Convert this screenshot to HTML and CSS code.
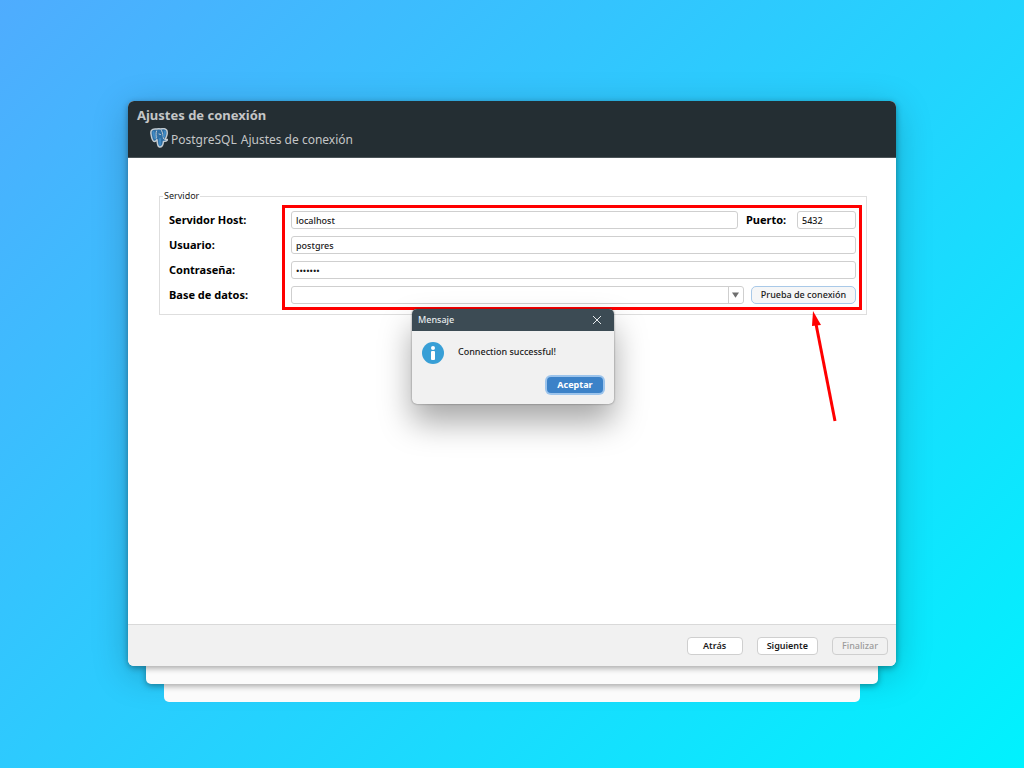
FILE: index.html
```html
<!DOCTYPE html>
<html lang="es">
  <head>
    <meta charset="UTF-8" />
    <meta name="viewport" content="width=device-width, initial-scale=1.0" />
    <title>Ajustes de conexión</title>
    <link rel="stylesheet" href="styles.css">
  </head>

  <body>
    <div class="stack">
      <div class="window">
        <header class="header">
          <h1>Ajustes de conexión</h1>
          <p>
            <svg class="logo" viewBox="0 0 36 40" aria-hidden="true">
              <path d="M10 2C3 2 1 6 2 12c1 7 3 15 7 15 2 0 3-2 5-3 1 5 0 13 5 14 7 1 7-6 8-11 3 0 8-1 8-4h-5c4-6 6-15 3-19-3-3-8-3-11-2C17 1 14 2 10 2z" fill="#2f6ea3" stroke="#c3cbd1" stroke-width="3" stroke-linejoin="round" />
              <path d="M13 6c-2 5 0 9-1 13M14 23c-3 0-3-2-1-5M23 5c3 5 3 11 4 16M18 12l3 1" fill="none" stroke="#c3cbd1" stroke-width="2" stroke-linecap="round" />
              <path d="M7 8c0 5 1 8 3 12M20 22v12M30 7c0 5-1 7-2 10" fill="none" stroke="#3f8ac4" stroke-width="4" stroke-linecap="round" />
            </svg>
            <span>PostgreSQL</span>
            <span>Ajustes de conexión</span>
          </p>
        </header>

        <main class="content">
          <fieldset class="server">
            <legend>Servidor</legend>
            <form class="fields" id="connection">
              <div class="row">
                <label for="host">Servidor Host:</label>
                <input type="text" id="host" value="localhost" />
                <label class="port-label" for="port">Puerto:</label>
                <input class="port" type="text" id="port" value="5432" />
              </div>
              <div class="row">
                <label for="user">Usuario:</label>
                <input type="text" id="user" value="postgres" />
              </div>
              <div class="row">
                <label for="password">Contraseña:</label>
                <input type="password" id="password" value="usuario" />
              </div>
              <div class="row">
                <label for="database">Base de datos:</label>
                <div class="combo">
                  <select id="database">
                    <option value=""></option>
                  </select>
                  <svg viewBox="0 0 8 6" aria-hidden="true"><path d="M0 0h8L4 6z" fill="#6e6e6e" /></svg>
                </div>
                <button class="test" type="button">Prueba de conexión</button>
              </div>
              <div class="mark"></div>
            </form>
          </fieldset>

          <svg class="arrow" viewBox="0 0 28 114" aria-hidden="true">
            <path d="M7 14l19 97" stroke="#ff0000" stroke-width="3" />
            <path d="M4 1l8 14-9 1z" fill="#ff0000" />
          </svg>

          <section class="dialog" role="dialog" aria-labelledby="message">
            <div class="titlebar">
              <h2 id="message">Mensaje</h2>
              <button class="close" type="button" aria-label="Cerrar">
                <svg viewBox="0 0 10 10" aria-hidden="true"><path d="M1 1l8 8M9 1L1 9" stroke="#e6eaec" stroke-width="1" /></svg>
              </button>
            </div>
            <div class="message">
              <svg viewBox="0 0 22 22" aria-hidden="true">
                <circle cx="11" cy="11" r="11" fill="#389fd6" />
                <circle cx="11" cy="6" r="2" fill="#fff" />
                <rect x="9" y="9" width="4" height="9" rx="1" fill="#fff" />
              </svg>
              <p>Connection successful!</p>
            </div>
            <button class="accept" type="button">Aceptar</button>
          </section>
        </main>

        <footer class="footer">
          <button type="button">Atrás</button>
          <button type="button">Siguiente</button>
          <button type="button" disabled>Finalizar</button>
        </footer>
      </div>
      <div class="sheet"></div>
      <div class="sheet last"></div>
    </div>
  </body>
</html>
```

FILE: styles.css
```css
* {
  box-sizing: border-box;
}

body {
  display: flex;
  min-height: 100vh;
  margin: 0;
  padding: 101px 128px 66px;
  background: linear-gradient(135deg, #4facfe 0%, #00f2fe 100%);
  font-family: "Noto Sans", sans-serif;
  font-size: 9px;
  line-height: 12px;
  color: #1a1a1a;
}

h1, h2, p {
  margin: 0;
}

input, select, button {
  font: inherit;
  font-weight: 500;
  color: inherit;
}

.stack {
  position: relative;
  flex: 1;
  display: flex;
  flex-direction: column;
}

/* wide shadow, stays behind the sheets */
.stack::before {
  content: "";
  position: absolute;
  inset: 0 0 36px;
  border-radius: 6px;
  box-shadow: 0 8px 36px rgba(0, 0, 0, 0.22);
}

.window {
  position: relative;
  z-index: 3;
  flex: 1;
  display: flex;
  flex-direction: column;
  border-radius: 6px;
  background-color: #fff;
  box-shadow: 0 2px 6px rgba(0, 0, 0, 0.35);
}

.header {
  height: 57px;
  padding: 5px 9px;
  border-bottom: 1px solid #4b5458;
  border-radius: 6px 6px 0 0;
  background-color: #242e33;
  color: #c4c6c7;
}

.header h1 {
  font-size: 13px;
  line-height: 18px;
  font-weight: 700;
}

.header p {
  display: flex;
  align-items: center;
  gap: 4px;
  padding: 4px 12px;
  font-size: 12px;
  line-height: 22px;
}

.logo {
  width: 18px;
  height: 20px;
  margin: 0 -1px 3px 1px;
}

/* server settings */
.content {
  position: relative;
  flex: 1;
  padding: 32px 29px 0 31px;
}

.server {
  min-width: 0;
  margin: 0;
  padding: 9px 10px 10px 9px;
  border: 1px solid #dedede;
}

.server legend {
  margin-left: -6px;
  padding: 0 1px;
}

.fields {
  position: relative;
  display: flex;
  flex-direction: column;
  gap: 7px;
}

.row {
  display: flex;
  align-items: center;
  height: 18px;
}

.row label {
  flex: none;
  width: 122px;
  font-size: 11px;
  font-weight: 700;
  color: #000;
}

.row input, .combo select {
  flex: 1;
  min-width: 0;
  height: 18px;
  padding: 0 4px;
  border: 1px solid #cfcfcf;
  border-radius: 3px;
  background-color: #fff;
}

.row .port-label {
  width: 51px;
  margin-left: 8px;
}

.row .port {
  flex: none;
  width: 59px;
}

.combo {
  position: relative;
  flex: 1;
  display: flex;
}

.combo select {
  appearance: none;
}

.combo svg {
  position: absolute;
  top: 6px;
  right: 5px;
  width: 7px;
  height: 6px;
  pointer-events: none;
}

.combo::after {
  content: "";
  position: absolute;
  top: 1px;
  bottom: 1px;
  right: 15px;
  border-left: 1px solid #cfcfcf;
}

.test {
  width: 105px;
  height: 18px;
  margin-left: 7px;
  padding: 0;
  border: 1px solid #a9c9e8;
  border-radius: 5px;
  background-color: #f5f6f7;
}

.mark {
  position: absolute;
  top: -6px;
  right: -6px;
  bottom: -6px;
  left: 113px;
  border: 3px solid #ff0000;
  pointer-events: none;
}

.arrow {
  position: absolute;
  top: 152px;
  right: 59px;
  width: 28px;
  height: 114px;
  fill: none;
}

/* message box */
.dialog {
  position: absolute;
  top: 151px;
  left: calc(50% - 100px);
  display: flex;
  flex-direction: column;
  width: 202px;
  border-radius: 5px;
  background-color: #f1f1f1;
  box-shadow: 0 0 2px rgba(0, 0, 0, 0.5), 0 18px 32px rgba(0, 0, 0, 0.35);
}

.titlebar {
  display: flex;
  align-items: center;
  justify-content: space-between;
  height: 22px;
  padding: 0 12px 0 6px;
  border-radius: 5px 5px 0 0;
  background-color: #3c4b54;
  color: #e6eaec;
}

.titlebar h2 {
  font-size: 9px;
  font-weight: 500;
}

.close {
  display: flex;
  padding: 0;
  border: 0;
  background: none;
}

.close svg {
  width: 10px;
  height: 10px;
}

.message {
  display: flex;
  gap: 14px;
  padding: 10px 10px 8px;
}

.message svg {
  width: 22px;
  height: 24px;
}

.message p {
  padding-top: 5px;
  font-weight: 500;
}

.accept {
  align-self: flex-end;
  width: 56px;
  height: 16px;
  margin: 4px 11px 11px;
  padding: 0;
  border: 0;
  border-radius: 4px;
  background-color: #3c82c8;
  box-shadow: 0 0 0 2px #9cc4ec;
  color: #fff;
  font-weight: 700;
}

/* wizard buttons */
.footer {
  display: flex;
  justify-content: flex-end;
  gap: 14px;
  padding: 12px 8px 11px;
  border-top: 1px solid #d9d9d9;
  border-radius: 0 0 6px 6px;
  background-color: #f1f1f1;
}

.footer button {
  min-width: 56px;
  height: 18px;
  padding: 0 9px;
  border: 1px solid #cfcfcf;
  border-radius: 4px;
  background-color: #fff;
  font-weight: 600;
}

.footer button:disabled {
  padding: 0 8px;
  background-color: #f1f1f1;
  color: #9b9b9b;
  font-weight: 500;
}

/* sheets under the window */
.sheet {
  position: relative;
  z-index: 2;
  height: 18px;
  margin: 0 18px;
  border-radius: 0 0 5px 5px;
  background-color: #fbfbfb;
  box-shadow: 0 2px 6px rgba(0, 0, 0, 0.35);
}

.sheet.last {
  z-index: 1;
  margin: 0 36px;
  box-shadow: none;
}
```
